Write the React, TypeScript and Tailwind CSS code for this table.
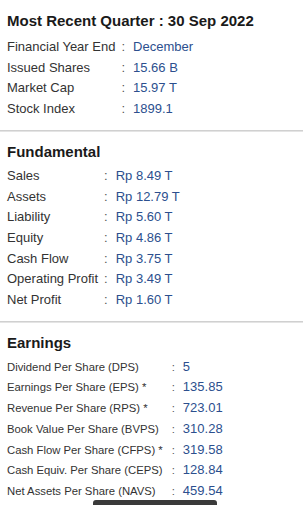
import React from "react";

type Row = [string, string];

const quarter: Row[] = [
  ["Financial Year End", "December"],
  ["Issued Shares", "15.66 B"],
  ["Market Cap", "15.97 T"],
  ["Stock Index", "1899.1"],
];

const fundamental: Row[] = [
  ["Sales", "Rp 8.49 T"],
  ["Assets", "Rp 12.79 T"],
  ["Liability", "Rp 5.60 T"],
  ["Equity", "Rp 4.86 T"],
  ["Cash Flow", "Rp 3.75 T"],
  ["Operating Profit", "Rp 3.49 T"],
  ["Net Profit", "Rp 1.60 T"],
];

const earnings: Row[] = [
  ["Dividend Per Share (DPS)", "5"],
  ["Earnings Per Share (EPS) *", "135.85"],
  ["Revenue Per Share (RPS) *", "723.01"],
  ["Book Value Per Share (BVPS)", "310.28"],
  ["Cash Flow Per Share (CFPS) *", "319.58"],
  ["Cash Equiv. Per Share (CEPS)", "128.84"],
  ["Net Assets Per Share (NAVS)", "459.54"],
];

const Table = ({ rows, small }: { rows: Row[]; small?: boolean }) => (
  <div
    className={`grid grid-cols-[auto_auto_1fr] items-baseline leading-[20.7px] ${
      small ? "text-[11.3px]" : "text-[13px]"
    }`}
  >
    {rows.map(([label, value]) => (
      <React.Fragment key={label}>
        <span className="text-[#333] whitespace-nowrap">{label}</span>
        <span className={`text-[#555] ${small ? "pl-[9px] pr-[8px]" : "pl-[6px] pr-[8px]"}`}>:</span>
        <span className={`text-[#2c4f8e] ${small ? "text-[13px]" : ""}`}>{value}</span>
      </React.Fragment>
    ))}
  </div>
);

const Divider = () => <div className="h-[2px] bg-[#d0d0d0] border-b border-[#e4e4e4]" />;

export default function App() {
  return (
    <div className="relative w-[303px] h-[505px] overflow-hidden bg-white font-['Liberation_Sans',Arial,sans-serif]">
      <section className="px-[7px] pt-[11px] pb-[10px]">
        <h2 className="text-[15px] leading-[20px] font-bold text-[#1a1a1a] mb-[6px]">
          Most Recent Quarter : 30 Sep 2022
        </h2>
        <Table rows={quarter} />
      </section>
      <Divider />
      <section className="px-[7px] pt-[10px] pb-[10px]">
        <h2 className="text-[15px] leading-[20px] font-bold text-[#1a1a1a] mb-[4px]">Fundamental</h2>
        <Table rows={fundamental} />
      </section>
      <Divider />
      <section className="px-[7px] pt-[10px]">
        <h2 className="text-[15px] leading-[20px] font-bold text-[#1a1a1a] mb-[4px]">Earnings</h2>
        <Table rows={earnings} small />
      </section>
      <div className="absolute bottom-0 left-[93px] w-[124px] h-[5px] rounded-t-[3px] bg-[#3a3a3a]" />
    </div>
  );
}
